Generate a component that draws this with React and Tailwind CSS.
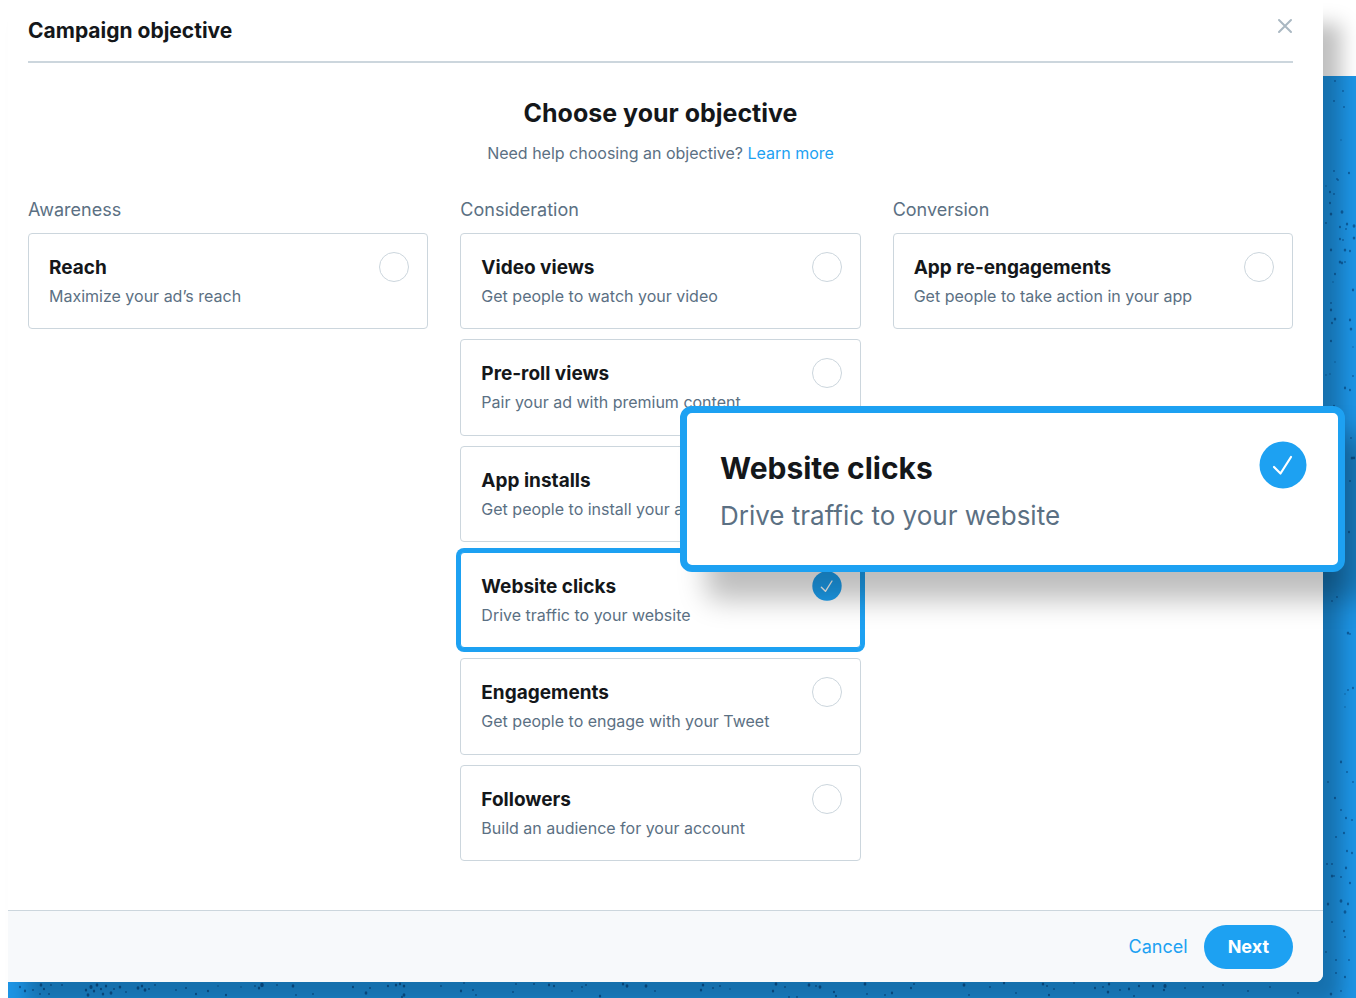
import { useState } from 'react';

const GROUPS = [
  {
    name: 'Awareness',
    items: [{ id: 'reach', title: 'Reach', text: 'Maximize your ad’s reach' }],
  },
  {
    name: 'Consideration',
    items: [
      { id: 'video', title: 'Video views', text: 'Get people to watch your video' },
      { id: 'preroll', title: 'Pre-roll views', text: 'Pair your ad with premium content' },
      { id: 'installs', title: 'App installs', text: 'Get people to install your app' },
      { id: 'clicks', title: 'Website clicks', text: 'Drive traffic to your website' },
      { id: 'engagements', title: 'Engagements', text: 'Get people to engage with your Tweet' },
      { id: 'followers', title: 'Followers', text: 'Build an audience for your account' },
    ],
  },
  {
    name: 'Conversion',
    items: [
      { id: 'reengage', title: 'App re-engagements', text: 'Get people to take action in your app' },
    ],
  },
];

// [x, y, radius] of the ink flecks on the blue backdrop
const SIDE_FLECKS = [
  [12, 5, 1], [20, 15, 1], [11, 25, 1], [21, 31, 1], [18, 64, 0.7], [11, 95, 1], [26, 97, 1.3],
  [14, 103, 1], [15, 104, 1], [3, 110, 0.8], [7, 116, 1.2], [11, 118, 1], [7, 127, 1.2], [8, 138, 1.6],
  [19, 136, 1.8], [3, 147, 1], [17, 151, 1.2], [24, 148, 1.5], [31, 150, 1.8], [23, 153, 1],
  [17, 163, 1.2], [20, 164, 1], [31, 162, 1.6], [8, 174, 1.4], [22, 174, 1.6], [27, 175, 1.2],
  [17, 186, 1.6], [19, 187, 1.4], [22, 186, 1], [12, 198, 1.2], [10, 206, 0.8], [30, 214, 1.4],
  [8, 227, 1], [8, 234, 1.4], [12, 243, 1.6], [9, 247, 1.2], [27, 244, 1.4], [28, 253, 1.6],
  [8, 265, 1.3], [30, 271, 0.8], [12, 286, 0.8], [3, 299, 0.8], [7, 298, 0.8], [30, 300, 1],
  [22, 312, 1.4], [27, 314, 1.2], [11, 330, 1.2], [28, 362, 1], [29, 382, 1.6], [31, 382, 1.4],
  [27, 405, 1.1], [26, 456, 1.2], [9, 525, 0.9], [14, 521, 0.9], [25, 557, 1.6], [27, 558, 1],
  [30, 612, 1.2], [25, 614, 1], [22, 618, 0.8], [22, 631, 0.8], [18, 686, 1.4], [24, 696, 1.1],
  [5, 706, 1], [30, 706, 1], [12, 722, 1.3], [18, 734, 1.1], [23, 742, 1.2], [29, 744, 1.1],
  [21, 757, 1.3], [13, 761, 1.1], [24, 775, 1.2], [29, 777, 1.2], [4, 788, 1.1], [9, 788, 1.1],
  [23, 792, 1.4], [9, 800, 1.5], [11, 800, 1], [18, 801, 1.1], [27, 807, 1.3], [5, 828, 1.5],
  [18, 825, 1.8], [25, 828, 1.4], [22, 836, 1.8], [9, 846, 1.1], [21, 855, 1.2], [22, 861, 1.1],
  [3, 876, 1], [13, 884, 1.1], [26, 884, 1.1], [13, 897, 1.1], [22, 901, 1.3], [8, 918, 1.6],
  [18, 915, 1],
];

const BOTTOM_FLECKS = [
  [12, 5, 1.2], [17, 9, 1.4], [25, 8, 1.1], [33, 3, 1.7], [36, 7, 1.3], [32, 12, 1.1], [41, 12, 1.1],
  [43, 3, 0.9], [54, 3, 1], [78, 8, 1.5], [80, 13, 1.8], [83, 5, 2], [86, 9, 1.5], [89, 3, 1.7],
  [93, 7, 1.3], [95, 12, 1.6], [98, 4, 1.5], [103, 11, 1.8], [106, 7, 1.1], [112, 5, 1.6],
  [118, 10, 0.9], [130, 6, 1.8], [134, 4, 1.5], [137, 8, 1.8], [141, 7, 1.1], [147, 3, 1],
  [168, 8, 0.9], [178, 6, 1.1], [188, 12, 1.3], [200, 9, 1.3], [210, 4, 0.8], [218, 13, 1.3],
  [233, 5, 0.8], [247, 4, 0.9], [254, 3, 2.2], [251, 6, 1.5], [269, 3, 0.9], [285, 4, 1.7],
  [288, 13, 0.9], [305, 12, 1], [345, 5, 1.3], [358, 11, 1.7], [362, 6, 1.1], [380, 4, 1.3],
  [388, 3, 1.5], [392, 2, 1.4], [396, 4, 1.6], [396, 13, 1.8], [394, 15, 1.2], [433, 4, 0.9],
  [456, 1, 0.9], [453, 9, 1.4], [465, 8, 1.1], [468, 13, 0.9], [505, 10, 1], [508, 2, 0.9],
  [526, 2, 1.1], [541, 3, 1.4], [546, 4, 1.2], [564, 9, 0.9], [574, 5, 0.9], [578, 3, 1],
  [592, 14, 1.5], [615, 2, 1.5], [619, 4, 1.8], [638, 4, 1.8], [647, 9, 0.9], [693, 8, 1.5],
  [695, 3, 1.6], [705, 6, 1], [712, 4, 1], [722, 7, 0.8], [765, 9, 1.5], [768, 2, 1.7],
  [777, 5, 1], [781, 15, 1], [789, 15, 1], [801, 3, 1.7], [808, 4, 1], [812, 5, 1.8],
  [826, 10, 1.3], [828, 14, 1.2], [857, 2, 1.7], [859, 12, 1], [877, 13, 1], [884, 11, 1.4],
  [903, 6, 1.2], [906, 2, 1.1], [956, 3, 1.8], [961, 13, 1], [982, 5, 1], [996, 1, 1.4],
  [1008, 11, 0.9], [1035, 2, 1.6], [1039, 4, 1.1], [1041, 13, 1.3], [1046, 7, 0.9], [1066, 1, 0.9],
  [1087, 6, 1.2], [1095, 5, 1], [1100, 10, 1.6], [1101, 2, 1.5], [1112, 8, 1.1], [1121, 7, 1.4],
  [1126, 14, 1.1], [1131, 4, 1.3], [1145, 4, 1.5], [1157, 4, 2], [1156, 8, 1.3], [1177, 6, 0.9],
  [1195, 5, 1.1], [1215, 3, 1.1], [1240, 9, 1], [1262, 5, 0.9], [1290, 11, 1],
];

function Backdrop() {
  return (
    <div className="col-start-1 row-start-1 mt-19 flex justify-end overflow-hidden bg-[#1d95e6]">
      <svg className="h-4 min-w-0 flex-1 self-end" fill="#07508f" fillOpacity="0.85" aria-hidden="true">
        {BOTTOM_FLECKS.map(([x, y, r]) => (
          <ellipse key={`${x}-${y}`} cx={x} cy={y} rx={r * 0.8} ry={r} />
        ))}
      </svg>
      <svg className="h-full w-[33px]" fill="#0a5797" fillOpacity="0.85" aria-hidden="true">
        {SIDE_FLECKS.map(([x, y, r]) => (
          <ellipse key={`${x}-${y}`} cx={x} cy={y} rx={r * 0.8} ry={r} />
        ))}
      </svg>
    </div>
  );
}

function Check({ className }) {
  return (
    <svg viewBox="0 0 48 48" className={className} aria-hidden="true">
      <circle cx="24" cy="24" r="23.5" fill="#1da1f2" />
      <path d="M15 26 21.500 32.500 32 16" fill="none" stroke="#fff" strokeWidth="2.2" strokeLinecap="round" strokeLinejoin="round" />
    </svg>
  );
}

function ObjectiveCard({ item, checked, onSelect }) {
  return (
    <label
      className={`flex cursor-pointer items-start justify-between rounded border bg-white pt-[18px] pr-[18px] pl-5 ${
        checked ? 'border-[#1da1f2] ring-4 ring-[#1da1f2]' : 'border-[#ccd6dd]'
      }`}
    >
      <span className="flex flex-col">
        <span className="text-[19px] leading-8 font-bold text-[#14171a]">{item.title}</span>
        <span className="text-base leading-6 text-[#5b7083]">{item.text}</span>
      </span>
      <input
        type="radio"
        name="objective"
        className="sr-only"
        checked={checked}
        onChange={() => onSelect(item.id)}
      />
      {checked ? (
        <Check className="size-[30px] shrink-0" />
      ) : (
        <span className="size-[30px] shrink-0 rounded-full border border-[#ccd6dd]" />
      )}
    </label>
  );
}

function Callout() {
  return (
    <div className="absolute top-[406px] right-[11px] flex w-[665px] items-start justify-between rounded-xl border-[7px] border-[#1da1f2] bg-white pt-7 pr-[31px] pb-7 pl-[33px] shadow-[26px_28px_28px_rgba(0,0,0,0.26)]">
      <div>
        <p className="text-3xl leading-[54px] font-bold text-[#14171a]">Website clicks</p>
        <p className="text-[26px] leading-[42px] text-[#5b7083]">Drive traffic to your website</p>
      </div>
      <Check className="size-12" />
    </div>
  );
}

export default function App() {
  const [selected, setSelected] = useState('clicks');

  return (
    <div className="relative grid min-h-screen overflow-hidden bg-white pl-2 font-['Inter','Liberation_Sans',sans-serif]">
      <Backdrop />
      <form
        className="col-start-1 row-start-1 mr-[33px] mb-4 flex flex-col rounded-br-lg bg-white shadow-[18px_24px_20px_rgba(0,0,0,0.25)]"
        onSubmit={(e) => e.preventDefault()}
      >
        <div className="flex-1 pr-[30px] pl-5">
          <header className="flex h-[63px] items-center justify-between border-b-2 border-[#ccd6dd]">
            <h1 className="text-[21px] leading-7 font-bold text-[#14171a]">Campaign objective</h1>
            <button type="button" aria-label="Close" className="mb-2.5">
              <svg viewBox="0 0 16 16" className="size-4" aria-hidden="true">
                <path d="M2 2 14 14M14 2 2 14" stroke="#aab8c2" strokeWidth="2" strokeLinecap="round" />
              </svg>
            </button>
          </header>

          <div className="pt-[30px] text-center">
            <h2 className="text-[25px] leading-10 font-bold text-[#14171a]">Choose your objective</h2>
            <p className="pt-2 text-base leading-6 text-[#5b7083]">
              Need help choosing an objective?{' '}
              <a href="#learn" className="text-[#1da1f2]">Learn more</a>
            </p>
          </div>

          <div className="grid grid-cols-3 gap-x-8 pt-[33px]">
            {GROUPS.map((group) => (
              <fieldset key={group.name} className="min-w-0">
                <legend className="pb-[11px] text-lg leading-6 text-[#5b7083]">{group.name}</legend>
                <div className="grid h-[628px] grid-rows-6 gap-2.5">
                  {group.items.map((item) => (
                    <ObjectiveCard
                      key={item.id}
                      item={item}
                      checked={item.id === selected}
                      onSelect={setSelected}
                    />
                  ))}
                </div>
              </fieldset>
            ))}
          </div>
        </div>

        <footer className="flex h-[72px] items-center justify-end gap-4 rounded-br-lg border-t border-[#ccd6dd] bg-[#f7f9fb] pr-[30px]">
          <button type="button" className="text-lg text-[#1da1f2]">Cancel</button>
          <button type="submit" className="h-11 rounded-full bg-[#1da1f2] px-6 text-lg font-bold text-white">
            Next
          </button>
        </footer>
      </form>
      <Callout />
    </div>
  );
}
